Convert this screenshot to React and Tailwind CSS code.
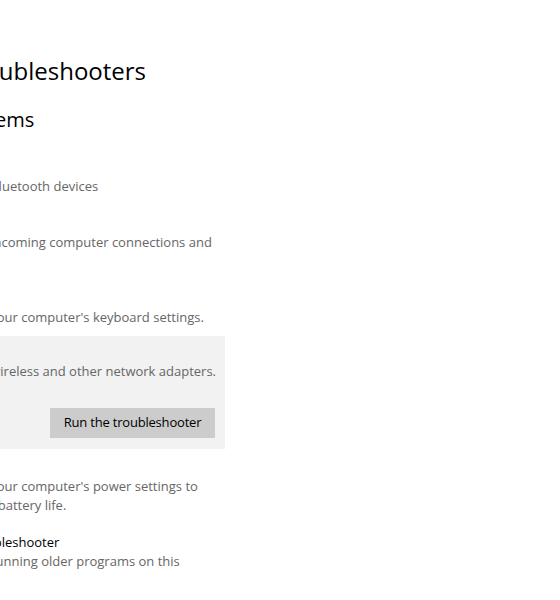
import { Bluetooth, Keyboard, Monitor, Network, Power, Radio } from 'lucide-react';

const items = [
  { title: 'Bluetooth', icon: Bluetooth, lines: ['Find and fix problems with Bluetooth devices'] },
  {
    title: 'Incoming Connections',
    icon: Radio,
    lines: ['Find and fix problems with incoming computer connections and', 'Windows Firewall.'],
  },
  { title: 'Keyboard', icon: Keyboard, lines: ["Find and fix problems with your computer's keyboard settings."] },
  {
    title: 'Network Adapter',
    icon: Network,
    lines: ['Find and fix problems with wireless and other network adapters.'],
    selected: true,
  },
  {
    title: 'Power',
    icon: Power,
    lines: ["Find and fix problems with your computer's power settings to", 'conserve power and extend battery life.'],
  },
  {
    title: 'Program Compatibility Troubleshooter',
    icon: Monitor,
    lines: ['Find and fix problems with running older programs on this', 'version of Windows.'],
  },
];

function Item({ item }) {
  const Icon = item.icon;
  return (
    <div
      className={
        item.selected
          ? 'flex gap-[24px] pl-[22px] pr-[10px] pt-[7px] pb-[11px] bg-[#f2f2f2]'
          : 'flex gap-[24px] pl-[22px] pr-[10px] py-[9px]'
      }
    >
      <Icon className="w-[20px] h-[20px] mt-[2px] shrink-0 text-black" strokeWidth={1.25} />
      <div className="flex-1 min-w-0">
        <p className="text-[13px] leading-[19px] text-black whitespace-nowrap">{item.title}</p>
        {item.lines.map((l) => (
          <p key={l} className="text-[13px] leading-[19px] text-[#666666] whitespace-nowrap">
            {l}
          </p>
        ))}
        {item.selected && (
          <div className="flex justify-end mt-[27px]">
            <button className="h-[30px] w-[165px] bg-[#cccccc] text-[13px] tracking-[-0.2px] text-black">
              Run the troubleshooter
            </button>
          </div>
        )}
      </div>
    </div>
  );
}

export default function App() {
  return (
    <div className="w-[560px] h-[600px] overflow-hidden bg-white font-['Open_Sans',sans-serif]">
      <div className="ml-[-240px] w-[465px] pt-[55px]">
        <h1 className="pl-[86px] text-[24px] leading-[32px] text-black whitespace-nowrap">
          Additional troubleshooters
        </h1>
        <h2 className="pl-[16px] mt-[19px] text-[20px] leading-[28px] text-black whitespace-nowrap">
          Find and fix other problems
        </h2>
        <div className="mt-[15px] flex flex-col">
          {items.map((it) => (
            <Item key={it.title} item={it} />
          ))}
        </div>
      </div>
    </div>
  );
}
